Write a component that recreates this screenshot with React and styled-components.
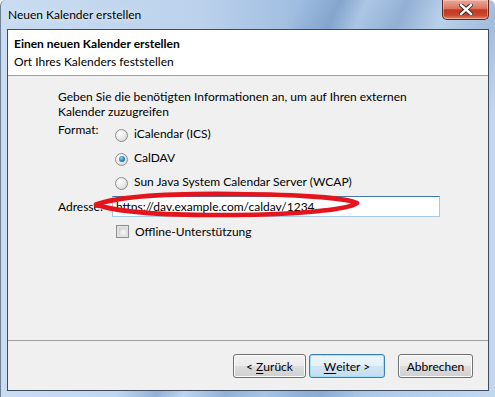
import React from "react";
import styled, { createGlobalStyle } from "styled-components";

const GlobalStyle = createGlobalStyle`
  html, body {
    margin: 0;
    padding: 0;
    background: #ffffff;
  }
  body {
    font-family: Lato, "Noto Sans", sans-serif;
    font-size: 12px;
    color: #000;
  }
`;

function App() {
  return (
    <>
      <GlobalStyle />
      <Window>
        <TitleBar>
          <TitleText>Neuen Kalender erstellen</TitleText>
          <CloseButton>
            <svg width="14" height="11" viewBox="0 0 14 11">
              <path
                d="M2 1 L12 10 M12 1 L2 10"
                stroke="#3a1a14"
                strokeWidth="4.2"
                strokeLinecap="square"
              />
              <path
                d="M2 1 L12 10 M12 1 L2 10"
                stroke="#ffffff"
                strokeWidth="2.4"
                strokeLinecap="square"
              />
            </svg>
          </CloseButton>
        </TitleBar>

        <Client>
          <Header>
            <HeaderTitle>Einen neuen Kalender erstellen</HeaderTitle>
            <HeaderSub>Ort Ihres Kalenders feststellen</HeaderSub>
          </Header>

          <Content>
            <Intro>
              Geben Sie die benötigten Informationen an, um auf Ihren externen
              <br />
              Kalender zuzugreifen
            </Intro>

            <FormRow>
              <Label top>Format:</Label>
              <Options>
                <Option>
                  <Radio />
                  iCalendar (ICS)
                </Option>
                <Option>
                  <Radio checked />
                  CalDAV
                </Option>
                <Option>
                  <Radio />
                  Sun Java System Calendar Server (WCAP)
                </Option>
              </Options>
            </FormRow>

            <AddressRow>
              <Label>Adresse:</Label>
              <TextField>https://dav.example.com/caldav/1234</TextField>
              <Marker width="268" height="28" viewBox="0 0 268 28">
                <path
                  d="M3 13.5 C 30 4, 90 2.5, 140 3 C 200 3.5, 252 6.5, 264 12 C 256 19, 200 23.5, 140 24 C 80 24.5, 25 21.5, 3 13.5 Z"
                  fill="none"
                  stroke="#e5131c"
                  strokeWidth="4.6"
                  strokeLinejoin="round"
                />
              </Marker>
            </AddressRow>

            <CheckRow>
              <Checkbox />
              Offline-Unterstützung
            </CheckRow>
          </Content>

          <Footer>
            <Button width={73}>
              {"< "}
              <u>Z</u>urück
            </Button>
            <Button width={76} primary>
              <u>W</u>eiter{" >"}
            </Button>
            <Button width={75} spaced>
              Abbrechen
            </Button>
          </Footer>
        </Client>
      </Window>
    </>
  );
}

let Window = styled.div`
  position: relative;
  width: 495px;
  height: 397px;
  box-sizing: border-box;
  display: flex;
  flex-direction: column;
  border-left: 1px solid #6f7f94;
  border-radius: 6px 6px 0 0;
  overflow: hidden;
  background:
    linear-gradient(
      115deg,
      rgba(255, 255, 255, 0) 0%,
      rgba(255, 255, 255, 0) 44%,
      rgba(70, 110, 165, 0.35) 50%,
      rgba(255, 255, 255, 0) 54%,
      rgba(70, 110, 165, 0.3) 60%,
      rgba(255, 255, 255, 0) 66%,
      rgba(70, 110, 165, 0.25) 74%,
      rgba(255, 255, 255, 0) 80%
    ),
    linear-gradient(to right, #c9dcf1 0%, #bcd2ec 40%, #9fbde0 60%, #b2cbe8 80%, #c3d7ee 100%);
`;

let TitleBar = styled.div`
  height: 29px;
  display: flex;
  align-items: flex-start;
  padding-left: 7px;
`;

let TitleText = styled.div`
  margin-top: 7px;
  font-size: 12px;
  line-height: 16px;
  color: #000;
  text-shadow: 0 0 6px rgba(255, 255, 255, 0.9);
`;

let CloseButton = styled.div`
  margin-left: auto;
  margin-right: 6px;
  width: 47px;
  height: 20px;
  box-sizing: border-box;
  display: flex;
  align-items: center;
  justify-content: center;
  border: 1px solid #5b2a22;
  border-top: none;
  border-radius: 0 0 5px 5px;
  background: linear-gradient(
    to bottom,
    #e9a999 0%,
    #d9755f 45%,
    #c2381e 52%,
    #c9462c 80%,
    #e08a6c 100%
  );
  box-shadow: inset 0 0 0 1px rgba(255, 210, 200, 0.5);
`;

let Client = styled.div`
  flex: 1;
  margin: 0 6px 6px 6px;
  display: flex;
  flex-direction: column;
  border: 1px solid #3e4c5e;
  background: #f0f0f0;
`;

let Header = styled.div`
  height: 46px;
  box-sizing: border-box;
  padding: 5px 0 0 6px;
  background: #ffffff;
  border-bottom: 1px solid #a0a0a0;
`;

let HeaderTitle = styled.div`
  font-weight: bold;
  line-height: 18px;
`;

let HeaderSub = styled.div`
  line-height: 18px;
`;

let Content = styled.div`
  flex: 1;
  padding: 13px 0 0 50px;
`;

let Intro = styled.div`
  line-height: 15px;
  margin-bottom: 2px;
`;

let FormRow = styled.div`
  display: flex;
`;

let Label = styled.div`
  width: 54px;
  flex-shrink: 0;
  line-height: 15px;
  padding-top: ${(p) => (p.top ? "1px" : "0")};
`;

let Options = styled.div`
  display: flex;
  flex-direction: column;
  padding-left: 3px;
`;

let Option = styled.div`
  height: 24px;
  display: flex;
  align-items: center;
  gap: 6px;
  padding-top: 1px;
  box-sizing: border-box;
`;

let Radio = styled.span`
  position: relative;
  width: 13px;
  height: 13px;
  box-sizing: border-box;
  border-radius: 50%;
  border: 1px solid #8e8f8f;
  background: radial-gradient(circle at 35% 35%, #ffffff 0%, #e6e6e6 55%, #c9c9c9 100%);
  margin-top: 3px;

  &::after {
    content: "";
    display: ${(p) => (p.checked ? "block" : "none")};
    position: absolute;
    left: 2.5px;
    top: 2.5px;
    width: 6px;
    height: 6px;
    border-radius: 50%;
    background: radial-gradient(circle at 40% 35%, #8fd6f5 0%, #2a86c0 50%, #0e4a78 100%);
  }
`;

let AddressRow = styled.div`
  position: relative;
  display: flex;
  align-items: center;
  margin-top: 3px;
`;

let TextField = styled.div`
  width: 328px;
  height: 21px;
  box-sizing: border-box;
  padding: 0 3px;
  line-height: 19px;
  background: #ffffff;
  border: 1px solid #a4c9e3;
  border-top-color: #3d7bad;
`;

let Marker = styled.svg`
  position: absolute;
  left: 35px;
  top: -5px;
  pointer-events: none;
`;

let CheckRow = styled.div`
  display: flex;
  align-items: center;
  gap: 6px;
  margin-top: 6px;
  padding-left: 58px;
  height: 16px;
`;

let Checkbox = styled.span`
  width: 13px;
  height: 13px;
  box-sizing: border-box;
  border: 1px solid #8e8f8f;
  background: #f4f4f4;
  box-shadow: inset 0 0 0 2px #e1e1e1, inset 1px 1px 3px 2px #c8c8c8;
`;

let Footer = styled.div`
  height: 50px;
  box-sizing: border-box;
  border-top: 1px solid #a0a0a0;
  display: flex;
  justify-content: flex-end;
  align-items: flex-start;
  gap: 3px;
  padding: 13px 15px 0 0;
`;

let Button = styled.div`
  width: ${(p) => p.width}px;
  height: 24px;
  box-sizing: border-box;
  margin-left: ${(p) => (p.spaced ? "10px" : "0")};
  display: flex;
  align-items: center;
  justify-content: center;
  white-space: pre;
  border: 1px solid ${(p) => (p.primary ? "#3c7fb1" : "#707070")};
  border-radius: 3px;
  background: linear-gradient(
    to bottom,
    ${(p) => (p.primary ? "#eaf6fd" : "#f2f2f2")} 0%,
    ${(p) => (p.primary ? "#e6f0f8" : "#ebebeb")} 50%,
    ${(p) => (p.primary ? "#d3e5f2" : "#dddddd")} 51%,
    ${(p) => (p.primary ? "#c4dcee" : "#cfcfcf")} 100%
  );
  box-shadow: inset 0 0 0 1px ${(p) => (p.primary ? "#9fe0fb" : "#fcfcfc")};
  line-height: 15px;

  u {
    text-decoration: underline;
    text-underline-offset: 2px;
  }
`;

export default App;
